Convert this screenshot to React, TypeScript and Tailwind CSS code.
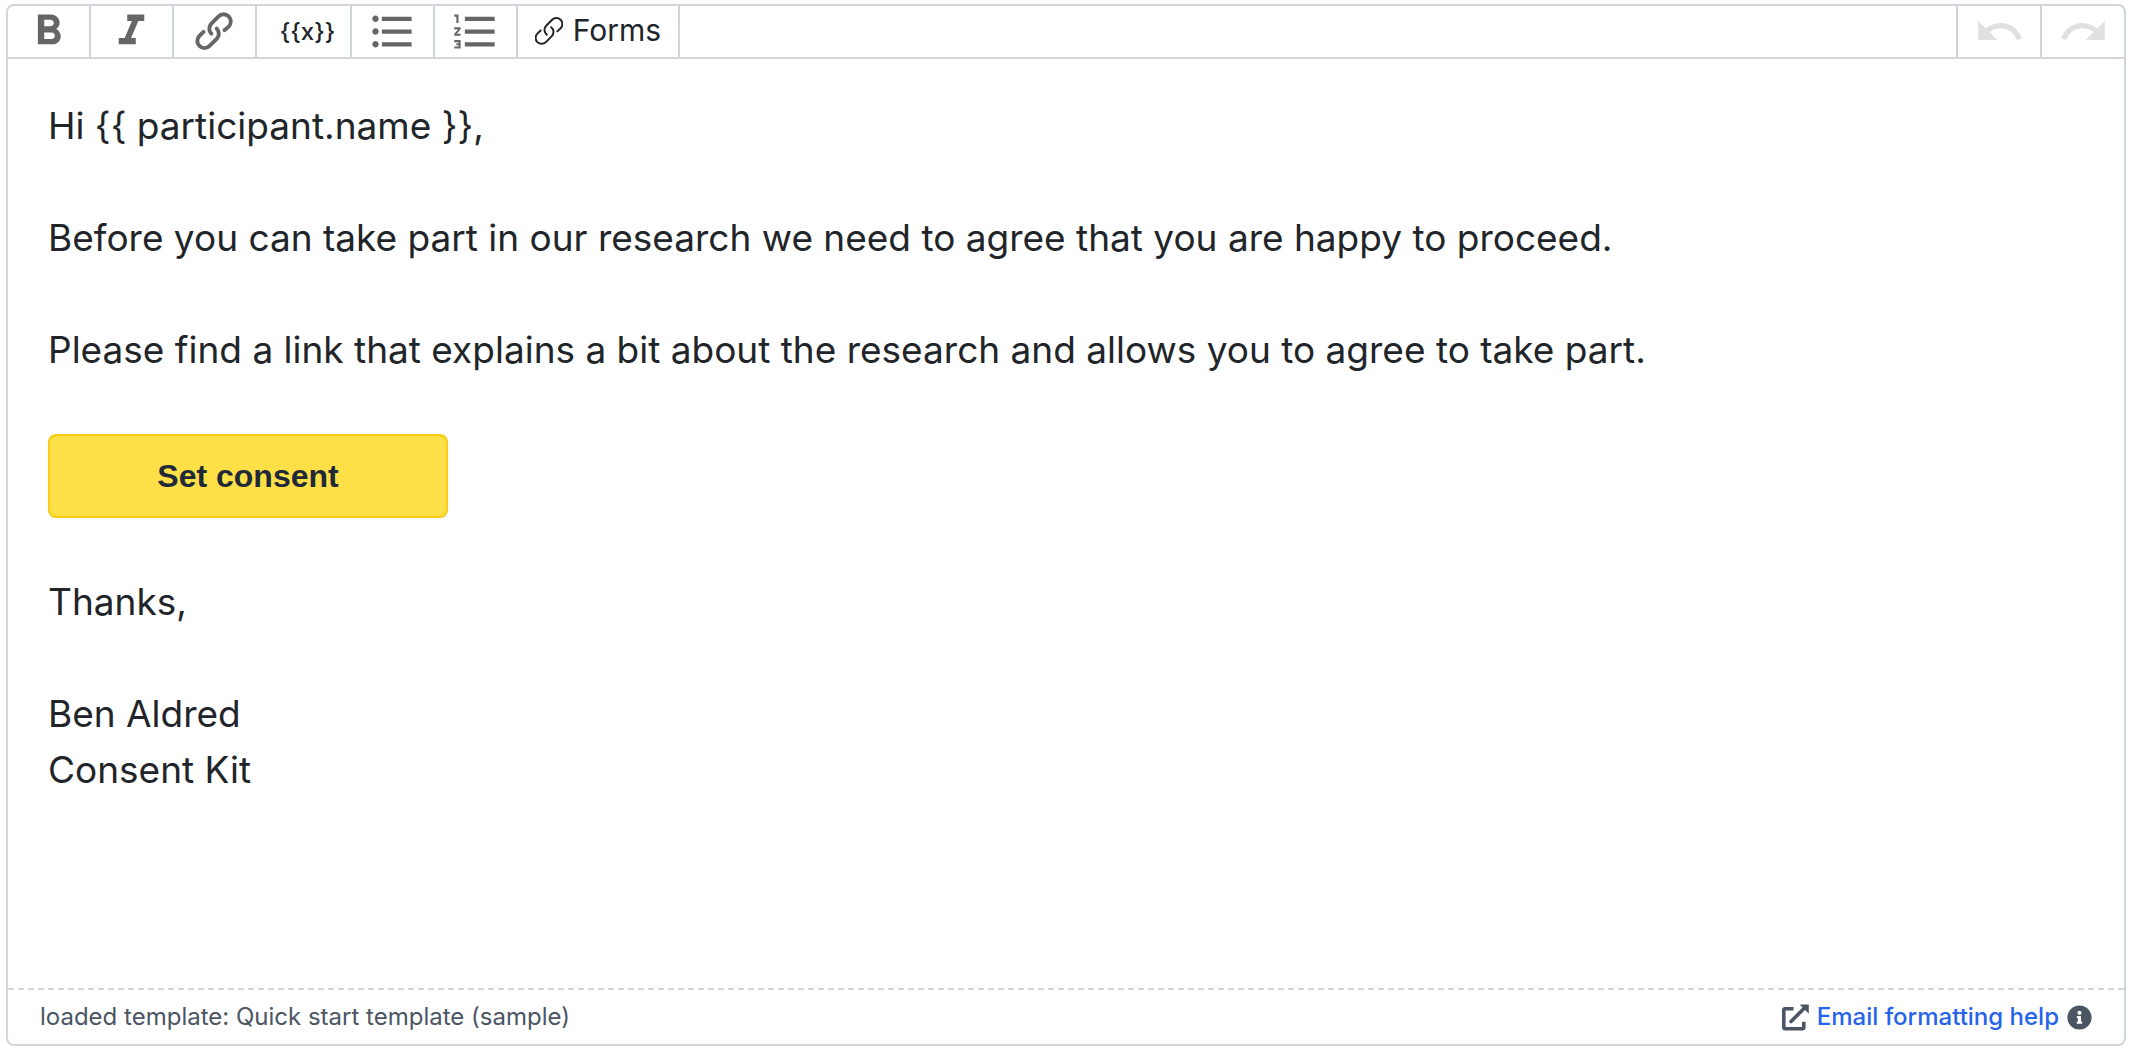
import type { ReactNode } from "react";
import { FaInfoCircle } from "react-icons/fa";
import {
  MdFormatBold,
  MdFormatItalic,
  MdFormatListBulleted,
  MdFormatListNumbered,
  MdRedo,
  MdUndo,
} from "react-icons/md";

interface ToolButtonProps {
  label: string;
  className?: string;
  disabled?: boolean;
  children: ReactNode;
}

const ToolButton = ({
  label,
  className = "w-[83px] border-r-2 text-[#666666]",
  disabled,
  children,
}: ToolButtonProps) => (
  <button
    type="button"
    aria-label={label}
    disabled={disabled}
    className={`flex items-center justify-center border-[#ced4da] ${className}`}
  >
    {children}
  </button>
);

const LinkIcon = () => (
  <svg viewBox="0 0 24 24" className="size-[51px]" fill="currentColor">
    <path d="M9.88 13.7a4.3 4.3 0 0 1 0-6.07l3.37-3.37a4.26 4.26 0 0 1 6.07 0 4.3 4.3 0 0 1 0 6.06l-1.96 1.72a.91.91 0 1 1-1.3-1.3l1.97-1.71a2.46 2.46 0 0 0-3.48-3.48l-3.38 3.37a2.46 2.46 0 0 0 0 3.48.91.91 0 1 1-1.3 1.3z" />
    <path d="M4.25 19.46a4.3 4.3 0 0 1 0-6.07l1.93-1.9a.91.91 0 1 1 1.3 1.3l-1.93 1.9a2.46 2.46 0 0 0 3.48 3.48l3.37-3.38c.96-.96.96-2.52 0-3.48a.91.91 0 1 1 1.3-1.3 4.3 4.3 0 0 1 0 6.07l-3.38 3.38a4.26 4.26 0 0 1-6.07 0z" />
  </svg>
);

const FormsIcon = () => (
  <svg
    viewBox="0 0 28 28"
    className="size-7"
    fill="none"
    stroke="currentColor"
    strokeWidth="2"
    strokeLinecap="round"
  >
    <path d="M11.8 17.6a6 6 0 0 1-.6-8.900l5.900-5.900a6 6 0 0 1 8.500 0 6 6 0 0 1 0 8.500l-3.200 3.100" />
    <path d="M16.200 10.200a6 6 0 0 1 .6 8.900l-5.900 6a6 6 0 0 1-8.500 0 6 6 0 0 1 0-8.500l3.200-3.100" />
  </svg>
);

const ExternalIcon = () => (
  <svg
    viewBox="0 0 27 27"
    className="size-[27px]"
    fill="none"
    stroke="currentColor"
    strokeWidth="3.6"
  >
    <path d="M11.5 4.8H3.3a1.5 1.5 0 0 0-1.5 1.5v17a1.5 1.5 0 0 0 1.5 1.5h17a1.5 1.5 0 0 0 1.5-1.5v-5.5" />
    <path d="M9 17.5 21.500 5" strokeLinecap="round" />
    <path d="M18.500.5h7.500a.8.8 0 0 1 .8.8v8.500l-8.800-8.800z" fill="currentColor" stroke="none" />
  </svg>
);

const Toolbar = () => (
  <div
    role="toolbar"
    aria-label="Formatting"
    className="flex h-[53px] justify-between border-b-2 border-gray-300"
  >
    <div className="flex">
      <ToolButton label="Bold">
        <MdFormatBold className="size-[51px]" />
      </ToolButton>
      <ToolButton label="Italic">
        <MdFormatItalic className="size-[51px]" />
      </ToolButton>
      <ToolButton label="Link">
        <LinkIcon />
      </ToolButton>
      <ToolButton
        label="Insert variable"
        className="w-[95px] border-r-2 pl-2 text-[24px] font-medium"
      >
        {"{{x}}"}
      </ToolButton>
      <ToolButton label="Bullets">
        <MdFormatListBulleted className="size-[51px]" />
      </ToolButton>
      <ToolButton label="Numbers">
        <MdFormatListNumbered className="size-[51px]" />
      </ToolButton>
      <ToolButton
        label="Forms"
        className="w-[162px] gap-[10px] border-r-2 pb-[2px] text-[30px]"
      >
        <FormsIcon />
        Forms
      </ToolButton>
    </div>
    <div className="flex">
      <ToolButton label="Undo" disabled className="w-21 border-l-2 text-[#e0e0e0]">
        <MdUndo className="size-[51px]" />
      </ToolButton>
      <ToolButton label="Redo" disabled className="w-21 border-l-2 text-[#e0e0e0]">
        <MdRedo className="size-[51px]" />
      </ToolButton>
    </div>
  </div>
);

const Message = () => (
  <main className="flex grow flex-col items-start gap-14 px-10 pt-[39px] text-[37px]/[56px]">
    <p>{"Hi {{ participant.name }},"}</p>
    <p>
      Before you can take part in our research we need to agree that you are
      happy to proceed.
    </p>
    <p>
      Please find a link that explains a bit about the research and allows you
      to agree to take part.
    </p>
    <button
      type="button"
      className="h-21 w-100 rounded-lg border-2 border-[#facc15] bg-[#fde047] font-['Liberation_Sans',sans-serif] text-[32px] font-bold text-[#1f2937]"
    >
      Set consent
    </button>
    <p>Thanks,</p>
    <p>
      Ben Aldred
      <br />
      Consent Kit
    </p>
  </main>
);

const StatusBar = () => (
  <footer className="flex h-14 items-center justify-between border-t-2 border-dashed border-gray-300 px-8 text-[24px] text-[#4b5563]">
    <p>loaded template: Quick start template (sample)</p>
    <div className="flex items-center gap-2">
      <ExternalIcon />
      <a href="#help" className="font-medium text-[#2563eb]">
        Email formatting help
      </a>
      <FaInfoCircle className="size-[25px]" />
    </div>
  </footer>
);

const App = () => (
  <div className="flex min-h-screen flex-col bg-white px-[6px] pt-1 pb-[14px] font-['Inter',sans-serif] text-[#212529]">
    <div className="flex grow flex-col rounded-lg border-2 border-gray-300">
      <Toolbar />
      <Message />
      <StatusBar />
    </div>
  </div>
);

export default App;
